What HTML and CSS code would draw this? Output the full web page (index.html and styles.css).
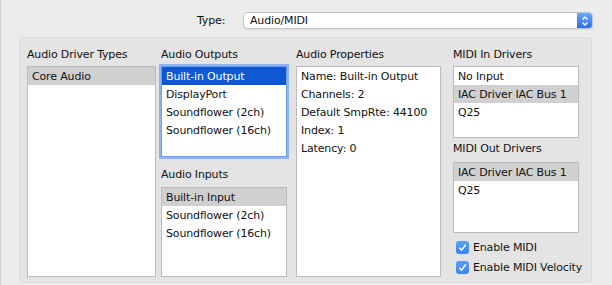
FILE: index.html
```html
<!DOCTYPE html>
<html lang="en">
<head>
    <meta charset="UTF-8">
    <title>Audio/MIDI Settings</title>
    <link rel="stylesheet" href="styles.css">
</head>
<body>
    <!-- Type selector -->
    <div class="type-row">
        <span class="type-label">Type:</span>
        <div class="select">
            <span class="select-value">Audio/MIDI</span>
            <span class="select-button">
                <svg width="8" height="12" viewBox="0 0 8 12">
                    <path d="M1.5 4.5 L4 2 L6.5 4.5 M1.5 7.5 L4 10 L6.5 7.5" fill="none" stroke="#fff" stroke-width="1.4"/>
                </svg>
            </span>
        </div>
    </div>

    <!-- Settings group -->
    <section class="group">
        <div class="column col-drivers">
            <div class="label">Audio Driver Types</div>
            <div class="list list-tall">
                <div class="row selected">Core Audio</div>
            </div>
        </div>

        <div class="column col-io">
            <div class="label">Audio Outputs</div>
            <div class="list list-outputs focused">
                <div class="row active">Built-in Output</div>
                <div class="row">DisplayPort</div>
                <div class="row">Soundflower (2ch)</div>
                <div class="row">Soundflower (16ch)</div>
            </div>
            <div class="label label-spaced">Audio Inputs</div>
            <div class="list list-inputs">
                <div class="row selected">Built-in Input</div>
                <div class="row">Soundflower (2ch)</div>
                <div class="row">Soundflower (16ch)</div>
            </div>
        </div>

        <div class="column col-props">
            <div class="label">Audio Properties</div>
            <div class="list list-tall">
                <div class="row">Name: Built-in Output</div>
                <div class="row">Channels: 2</div>
                <div class="row">Default SmpRte: 44100</div>
                <div class="row">Index: 1</div>
                <div class="row">Latency: 0</div>
            </div>
        </div>

        <div class="column col-midi">
            <div class="label">MIDI In Drivers</div>
            <div class="list list-midi-in">
                <div class="row">No Input</div>
                <div class="row selected">IAC Driver IAC Bus 1</div>
                <div class="row">Q25</div>
            </div>
            <div class="label label-midi-out">MIDI Out Drivers</div>
            <div class="list list-midi-out">
                <div class="row selected">IAC Driver IAC Bus 1</div>
                <div class="row">Q25</div>
            </div>
            <label class="check first">
                <span class="box">
                    <svg width="9" height="9" viewBox="0 0 9 9"><path d="M1.2 4.8 L3.5 7.2 L7.8 1.5" fill="none" stroke="#fff" stroke-width="1.5"/></svg>
                </span>
                Enable MIDI
            </label>
            <label class="check">
                <span class="box">
                    <svg width="9" height="9" viewBox="0 0 9 9"><path d="M1.2 4.8 L3.5 7.2 L7.8 1.5" fill="none" stroke="#fff" stroke-width="1.5"/></svg>
                </span>
                Enable MIDI Velocity
            </label>
        </div>
    </section>
</body>
</html>
```

FILE: styles.css
```css
/* Mac style preferences panel */
body {
    margin: 0;
    width: 612px;
    height: 285px;
    overflow: hidden;
    background-color: #ececec;
    border-left: 1px solid #cfcfcf;
    box-sizing: border-box;
    font-family: "DejaVu Sans", sans-serif;
    font-size: 11px;
    letter-spacing: -0.15px;
    color: #111;
}

.type-row {
    display: flex;
    align-items: center;
    padding: 12px 19px 0 196px;
}

.type-label {
    width: 46px;
}

.select {
    flex: 1;
    display: flex;
    height: 17px;
    box-sizing: border-box;
    background-color: #fff;
    border: 1px solid #c4c4c4;
    border-radius: 4px;
    box-shadow: 0 1px 1px rgba(0, 0, 0, 0.08);
    overflow: hidden;
}

.select-value {
    flex: 1;
    padding-left: 6px;
    line-height: 15px;
}

.select-button {
    width: 15px;
    display: flex;
    align-items: center;
    justify-content: center;
    background: linear-gradient(#6aa7fb, #2b6ff0);
}

.group {
    display: flex;
    width: 573px;
    height: 246px;
    box-sizing: border-box;
    margin: 8px 0 0 18px;
    padding: 8px 0 0 7px;
    background-color: #e4e4e4;
    border: 1px solid #dbdbdb;
    border-radius: 4px;
}

.column {
    display: flex;
    flex-direction: column;
}

.col-drivers { width: 129px; }
.col-io { width: 126px; margin-left: 5px; }
.col-props { width: 145px; margin-left: 9px; }
.col-midi { width: 126px; margin-left: 12px; }

.label {
    line-height: 18px;
    margin-bottom: 2px;
    white-space: nowrap;
}

.label-spaced {
    margin-top: 9px;
    margin-bottom: 3px;
}

.label-midi-out {
    margin-top: 2px;
    margin-bottom: 4px;
}

.list {
    box-sizing: border-box;
    background-color: #fff;
    border: 1px solid #bcbcbc;
}

.list-tall { height: 211px; }
.list-outputs { height: 91px; }
.list-inputs { height: 90px; }
.list-midi-in { height: 72px; }
.list-midi-out { height: 71px; }

.focused {
    border-color: #6c9ff0;
    box-shadow: 0 0 0 2px #8cb4f4;
}

.row {
    line-height: 18px;
    padding-left: 4px;
    padding-top: 1px;
    height: 18px;
    box-sizing: border-box;
    white-space: nowrap;
}

.row.selected {
    background-color: #d0d0d0;
}

.row.active {
    background-color: #0f58d2;
    color: #fff;
}

.check {
    display: flex;
    align-items: center;
    height: 20px;
    padding-left: 3px;
    white-space: nowrap;
}

.check.first {
    margin-top: 4px;
}

.box {
    flex: none;
    width: 13px;
    height: 13px;
    margin-right: 4px;
    display: flex;
    align-items: center;
    justify-content: center;
    background: linear-gradient(#5b9ef9, #3a82f4);
    border-radius: 3px;
}
```
